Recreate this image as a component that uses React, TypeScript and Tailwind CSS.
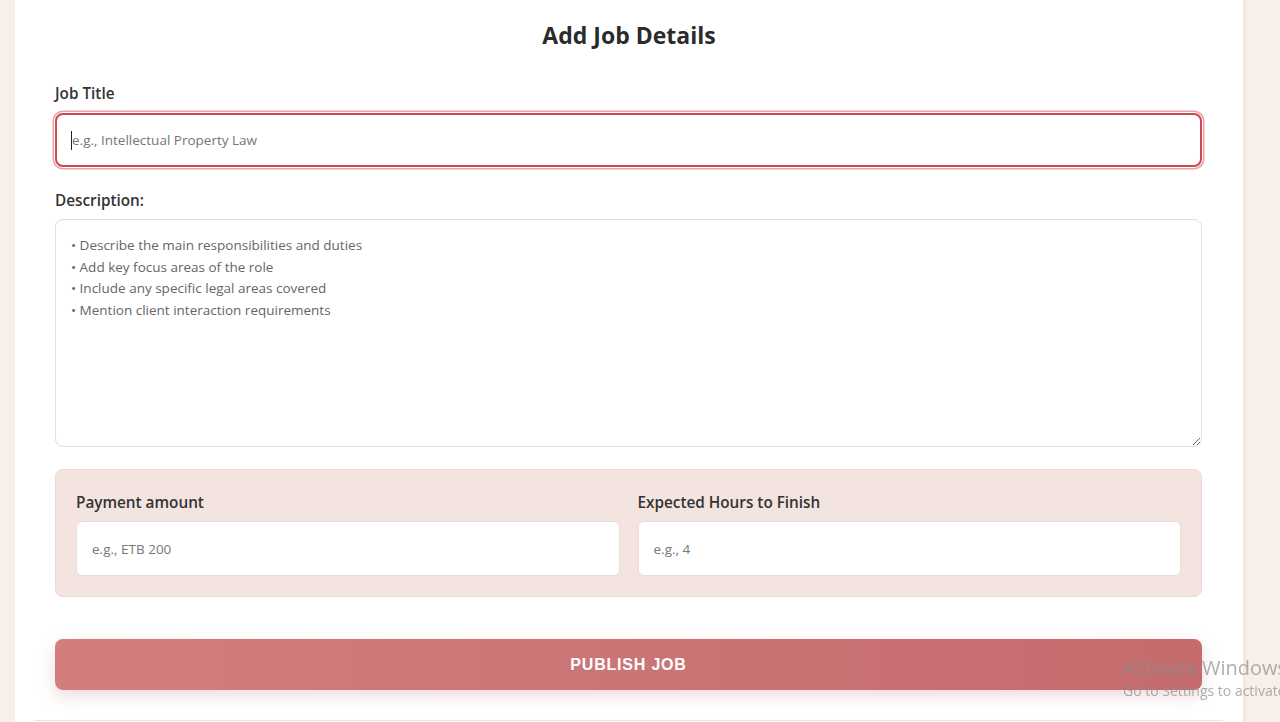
import { useState } from 'react'

export default function App() {
  const [title, setTitle] = useState('')
  const [desc, setDesc] = useState('')
  const [pay, setPay] = useState('')
  const [hours, setHours] = useState('')

  const font = { fontFamily: '"Open Sans", "Noto Sans", sans-serif' }

  return (
    <div className="min-h-[722px] bg-[#f7efe9] pl-[15px] pr-[34px]" style={font}>
      <div className="bg-white min-h-[722px] px-[40px] pt-[19px] pb-0 border-r-[3px] border-[#f3e8e2]">
        <h1 className="text-center text-[23px] leading-8 font-bold text-[#2b2b2b]">Add Job Details</h1>

        <form className="mt-[30px] mr-[1px]" onSubmit={(e) => e.preventDefault()}>
          {/* Job title */}
          <label className="block text-[15.3px] leading-6 font-semibold text-[#333] mb-[8px]">Job Title</label>
          <div className="relative">
            <input
              value={title}
              onChange={(e) => setTitle(e.target.value)}
              placeholder="e.g., Intellectual Property Law"
              className="w-full h-[54px] rounded-lg border-2 border-[#cf4a50] px-[15px] text-[13.5px] text-[#333] placeholder:text-[#767676] outline-none shadow-[0_0_0_1px_#fff,0_0_0_2.5px_#e8a3a6]"
            />
            {title === '' && <span className="absolute left-[16px] top-[18px] w-px h-[19px] bg-[#222] pointer-events-none" />}
          </div>

          {/* Description */}
          <label className="block mt-[21px] text-[15.3px] leading-6 font-semibold text-[#333] mb-[7px]">Description:</label>
          <textarea
            value={desc}
            onChange={(e) => setDesc(e.target.value)}
            placeholder={'• Describe the main responsibilities and duties\n• Add key focus areas of the role\n• Include any specific legal areas covered\n• Mention client interaction requirements'}
            className="block w-full h-[228px] rounded-lg border-[1.5px] border-[#e0e0e0] px-[15px] py-[15px] text-[13.5px] leading-[21.5px] text-[#333] placeholder:text-[#666] outline-none resize-y"
          />

          {/* Payment + hours */}
          <div className="mt-[22px] rounded-lg bg-[#f4e4df] border border-[#eed7d1] px-[20px] pt-[20px] pb-[20px] grid grid-cols-2 gap-x-[18px]">
            <div>
              <label className="block text-[15.3px] leading-6 font-semibold text-[#333] mb-[7px]">Payment amount</label>
              <input
                value={pay}
                onChange={(e) => setPay(e.target.value)}
                placeholder="e.g., ETB 200"
                className="w-full h-[55px] rounded-md bg-white border border-[#eadcd8] px-[15px] text-[13.5px] text-[#333] placeholder:text-[#777] outline-none"
              />
            </div>
            <div>
              <label className="block text-[15.3px] leading-6 font-semibold text-[#333] mb-[7px]">Expected Hours to Finish</label>
              <input
                value={hours}
                onChange={(e) => setHours(e.target.value)}
                placeholder="e.g., 4"
                className="w-full h-[55px] rounded-md bg-white border border-[#eadcd8] px-[15px] text-[13.5px] text-[#333] placeholder:text-[#777] outline-none"
              />
            </div>
          </div>

          <button
            type="submit"
            className="mt-[42px] w-full h-[51px] rounded-lg bg-gradient-to-r from-[#d27e7f] to-[#c46b6e] text-white text-[16px] font-bold tracking-[0.8px] shadow-[0_6px_16px_rgba(196,107,110,0.25)]"
            style={{ fontFamily: '"Liberation Sans", Arial, sans-serif' }}
          >
            PUBLISH JOB
          </button>
        </form>

        <div className="mt-[30px] mx-[-20px] border-t border-[#e6e6e6]" />
      </div>

      {/* OS watermark */}
      <div className="fixed left-[1123px] top-[654px] whitespace-nowrap pointer-events-none text-[#8c8c8c]/70">
        <div className="text-[20px] leading-[27px]">Activate Windows</div>
        <div className="text-[14px] leading-[20px]">Go to Settings to activate Windows.</div>
      </div>
    </div>
  )
}
